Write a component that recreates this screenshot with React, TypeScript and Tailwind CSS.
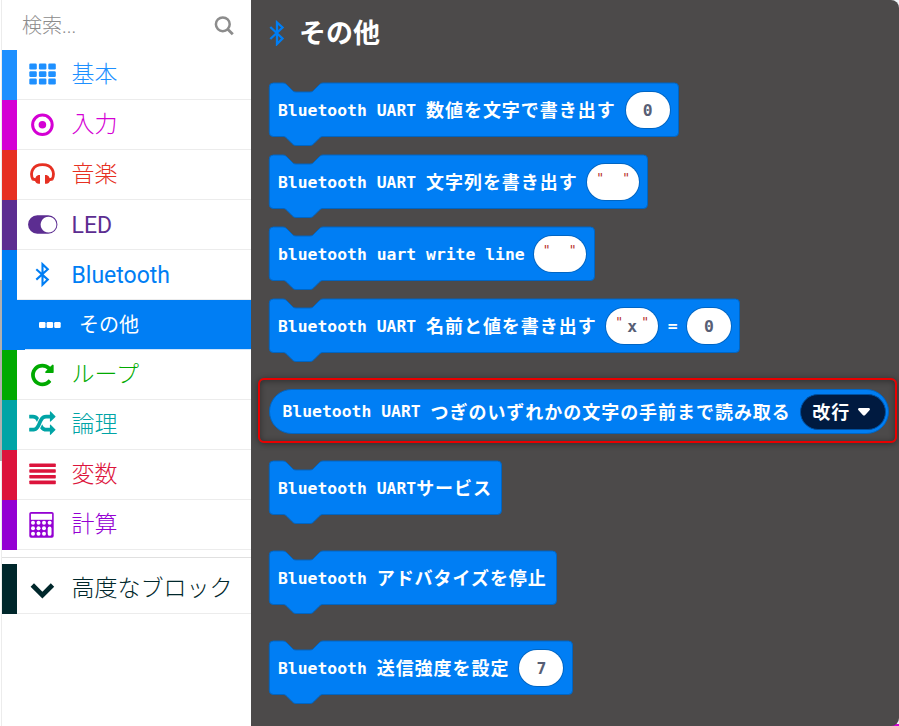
import type { ReactNode } from 'react';
import clsx from 'clsx';

interface Category {
  name: string;
  bar: string;
  text: string;
  icon: ReactNode;
}

const LABEL_FONT = "font-[Roboto,'Noto_Sans_CJK_JP',sans-serif]";
const JP_FONT = "font-['Noto_Sans_CJK_JP',sans-serif]";
const BLOCK_FONT = "font-['DejaVu_Sans_Mono','Noto_Sans_CJK_JP',monospace]";

function Icon({ children }: { children: ReactNode }) {
  return (
    <svg viewBox="0 0 32 32" className="w-8 h-8 shrink-0" fill="currentColor">
      {children}
    </svg>
  );
}

const GridIcon = (
  <Icon>
    {[4.6, 12.2, 19.6].map((y) =>
      [3.3, 12.9, 22.3].map((x) => <rect key={`${x}-${y}`} x={x} y={y} width="7.5" height="5.8" rx="1.2" />)
    )}
  </Icon>
);

const TargetIcon = (
  <Icon>
    <circle cx="16.4" cy="15.8" r="9.8" fill="none" stroke="currentColor" strokeWidth="3" />
    <circle cx="16.4" cy="15.8" r="3.8" />
  </Icon>
);

const HeadphoneIcon = (
  <Icon>
    <path
      d="M7 20.5C3.2 13.5 7 5.7 16.5 5.7S29.800 13.500 26 20.500"
      fill="none"
      stroke="currentColor"
      strokeWidth="2.8"
    />
    <path d="M14 16v8.800h-1.500C11 24.800 9.500 23.500 9 22L6 21.500L7.200 18.600L9.300 19.200C10 17.500 11 16.300 12.500 16zM19 16v8.800h1.500C22 24.800 23.500 23.500 24 22L27 21.500L25.800 18.600L23.700 19.200C23 17.500 22 16.300 20.500 16z" />
  </Icon>
);

const ToggleIcon = (
  <Icon>
    <path
      fillRule="evenodd"
      d="M11.300 6.300h10.900a9.250 9.250 0 0 1 0 18.500H11.300a9.250 9.250 0 0 1 0-18.500zM22.500 7.700a7.900 7.900 0 1 0 .01 0z"
    />
  </Icon>
);

const BluetoothIcon = (
  <Icon>
    <path
      d="M10.300 10.300L21.800 20.600L16.500 25.800V5.200L21.800 10.300L10.300 20.600"
      fill="none"
      stroke="currentColor"
      strokeWidth="2.1"
    />
  </Icon>
);

const RepeatIcon = (
  <Icon>
    <g transform="translate(3.200 2.800) scale(0.0147)">
      <path d="M1664 256v448q0 26-19 45t-45 19h-448q-42 0-59-40-17-39 14-69l138-138q-148-137-349-137-104 0-198.500 40.500t-163.500 109.500-109.500 163.500-40.500 198.500 40.500 198.500 109.500 163.500 163.500 109.500 198.500 40.500q119 0 225-52t179-147q7-10 23-12 15 0 25 9l137 138q9 8 9.500 20.500t-7.500 22.500q-109 132-264 204.500t-327 72.500q-156 0-298-61t-245-164-164-245-61-298 61-298 164-245 245-164 298-61q147 0 284.500 55.500t244.500 156.500l130-129q29-31 70-14 39 17 39 59z" />
    </g>
  </Icon>
);

const ShuffleIcon = (
  <Icon>
    <g transform="translate(3.200 1.900) scale(0.0147)">
      <path d="M666 481q-60 92-137 273-22-45-37-72.500t-40.500-63.500-51-56.500-63-35-81.500-14.500h-224q-14 0-23-9t-9-23v-192q0-14 9-23t23-9h224q250 0 410 225zm1126 799q0 14-9 23l-320 320q-9 9-23 9-13 0-22.500-9.500t-9.500-22.500v-192q-32 0-85 .5t-81 1-73-1-71-5-64-10.500-63-18.500-58-28.500-59-40-55-53.500-56-69.500q59-93 136-273 22 45 37 72.500t40.500 63.500 51 56.500 63 35 81.500 14.500h256v-192q0-14 9-23t23-9q12 0 24 10l319 319q9 9 9 23zm0-896q0 14-9 23l-320 320q-9 9-23 9-13 0-22.500-9.500t-9.500-22.500v-192h-256q-48 0-87 15t-69 45-51 61.500-45 77.500q-32 62-78 171-29 66-49.500 111t-54 105-64 100-74 83-90 68.500-106.500 42-128 16.500h-224q-14 0-23-9t-9-23v-192q0-14 9-23t23-9h224q48 0 87-15t69-45 51-61.500 45-77.500q32-62 78-171 29-66 49.500-111t54-105 64-100 74-83 90-68.500 106.500-42 128-16.500h256v-192q0-14 9-23t23-9q12 0 24 10l319 319q9 9 9 23z" />
    </g>
  </Icon>
);

const LinesIcon = (
  <Icon>
    {[4.500, 10.200, 15.900, 21.600].map((y) => (
      <rect key={y} x="3.300" y={y} width="26.500" height="3.600" rx="0.700" />
    ))}
  </Icon>
);

const CalcIcon = (
  <Icon>
    <rect x="3.300" y="3" width="24.400" height="25.700" rx="1.800" />
    <rect x="4.900" y="4.800" width="21.200" height="6" fill="white" />
    {[13.800, 19.300, 24.800].map((y) =>
      [7, 12.500, 18].map((x) => <circle key={`${x}-${y}`} cx={x} cy={y} r="2" fill="white" />)
    )}
    <circle cx="23.600" cy="13.800" r="2" fill="white" />
    <rect x="21.700" y="17.500" width="3.800" height="9.300" rx="1.900" fill="white" />
  </Icon>
);

const ChevronIcon = (
  <Icon>
    <path d="M6.300 12L16.400 22.100L26.500 12" fill="none" stroke="currentColor" strokeWidth="4.800" />
  </Icon>
);

const categories: Category[] = [
  { name: '基本', bar: 'bg-[#1e90ff]', text: 'text-[#1e90ff]', icon: GridIcon },
  { name: '入力', bar: 'bg-[#d400d4]', text: 'text-[#d400d4]', icon: TargetIcon },
  { name: '音楽', bar: 'bg-[#e63022]', text: 'text-[#e63022]', icon: HeadphoneIcon },
  { name: 'LED', bar: 'bg-[#5c2d91]', text: 'text-[#5c2d91]', icon: ToggleIcon },
  { name: 'Bluetooth', bar: 'bg-[#007ef4]', text: 'text-[#007ef4]', icon: BluetoothIcon },
];

const moreCategories: Category[] = [
  { name: 'ループ', bar: 'bg-[#00aa00]', text: 'text-[#00aa00]', icon: RepeatIcon },
  { name: '論理', bar: 'bg-[#00a4a6]', text: 'text-[#00a4a6]', icon: ShuffleIcon },
  { name: '変数', bar: 'bg-[#dc143c]', text: 'text-[#dc143c]', icon: LinesIcon },
  { name: '計算', bar: 'bg-[#9400d3]', text: 'text-[#9400d3]', icon: CalcIcon },
];

function CategoryRow({ category }: { category: Category }) {
  const latin = /^[A-Za-z]+$/.test(category.name);
  return (
    <div className="flex h-[50px]">
      <div className={clsx('w-[15px]', category.bar)} />
      <div className={clsx('flex flex-1 items-center border-b border-[#ececec] pl-[9px]', category.text)}>
        {category.icon}
        <span
          className={clsx(
            'ml-[13.5px] text-[23px] leading-8 whitespace-nowrap',
            latin ? 'pt-0.5 font-normal' : 'font-light',
            LABEL_FONT
          )}
        >
          {category.name}
        </span>
      </div>
    </div>
  );
}

function Sidebar() {
  return (
    <aside className="flex h-full w-[251px] shrink-0">
      <div className="w-0.5 border-r border-[#ececec]">
        <div className="mt-[280px] h-[181px] w-0.5 bg-[#b0b0b0]" />
      </div>
      <div className="flex-1">
        <div className="flex h-[50px] items-center justify-between pr-[17px] pl-5 text-[#8c8c8c]">
          <span className={clsx('pt-px text-[20px] leading-6 font-light', LABEL_FONT)}>検索...</span>
          <svg viewBox="0 0 20 20" className="mt-px h-5 w-5" fill="none" stroke="currentColor">
            <circle cx="8.800" cy="8.300" r="6.900" strokeWidth="2.500" />
            <path d="M13.700 13.200L18.800 18.300" strokeWidth="2.800" />
          </svg>
        </div>
        {categories.map((c) => (
          <CategoryRow key={c.name} category={c} />
        ))}
        <div className="flex h-[50px] text-white">
          <div className="w-[23px] bg-[#007ef4]" />
          <div className="flex flex-1 items-center border-b border-[#cfe4fa] bg-[#007ef4] bg-clip-padding pl-[15px]">
            <svg viewBox="0 0 22 6" className="-ml-px h-1.5 w-[22px]" fill="currentColor">
              {[0, 7.600, 15.200].map((x) => (
                <rect key={x} x={x} width="6.500" height="6" rx="1.200" />
              ))}
            </svg>
            <span className={clsx('ml-[18px] text-[20px] leading-6 font-normal', LABEL_FONT)}>その他</span>
          </div>
        </div>
        {moreCategories.map((c) => (
          <CategoryRow key={c.name} category={c} />
        ))}
        <div className="mt-[7px] mb-1.5 border-t border-[#e0e0e0]" />
        <CategoryRow
          category={{ name: '高度なブロック', bar: 'bg-[#00272b]', text: 'text-[#00272b]', icon: ChevronIcon }}
        />
      </div>
    </aside>
  );
}

function Latin({ children }: { children: ReactNode }) {
  return <span className="pt-px">{children}</span>;
}

function Jp({ children }: { children: ReactNode }) {
  return <span className={clsx('pb-0.5 text-[18px] font-bold tracking-[0.96px]', JP_FONT)}>{children}</span>;
}

function NumberInput({ value }: { value: string }) {
  return (
    <span className="-mt-px flex h-9 w-11 items-center justify-center rounded-full bg-white pt-[3px] text-[#575e75] ring-1 ring-[#0065c3]">
      {value}
    </span>
  );
}

function TextInput({ value }: { value: string }) {
  return (
    <span className="-mt-px flex h-9 w-[52px] items-center justify-center rounded-full bg-white pt-[3px] text-[#575e75] ring-1 ring-[#0065c3]">
      <span className="-mt-2.5 w-2 text-[13px] font-normal text-[#b7312c]">"</span>
      <span className="w-[18px] text-center">{value}</span>
      <span className="-mt-2.5 w-2 text-[13px] font-normal text-[#b7312c]">"</span>
    </span>
  );
}

interface BlockProps {
  width: number;
  children: ReactNode;
}

// statement block: notch on the top edge, matching tab under the bottom edge
function Block({ width, children }: BlockProps) {
  return (
    <div className="relative h-[54px]" style={{ width }}>
      <svg className="absolute top-0 left-0 overflow-visible" width={width} height="63">
        <path
          d={`M0.300 4a4 4 0 0 1 4-4H14c2 0 3 1 4 2l5 5c1 1 2 2 4 2h14c2 0 3-1 4-2l5-5c1-1 2-2 4-2H${width - 4.5}a4 4 0 0 1 4 4V49.500a4 4 0 0 1-4 4H54c-2 0-3 1-4 2l-5 5c-1 1-2 2-4 2H27c-2 0-3-1-4-2l-5-5c-1-1-2-2-4-2H4.300a4 4 0 0 1-4-4z`}
          fill="#007ef4"
          stroke="#0065c3"
        />
      </svg>
      <div className="relative flex h-[54px] items-center pl-[9px] whitespace-pre">{children}</div>
    </div>
  );
}

function Flyout() {
  return (
    <main className="h-full rounded-r-lg bg-[#4c4a4a] pl-[18px] text-white">
      <div className="flex h-[65px] items-center">
        <svg viewBox="0 0 16 26" className="h-[26px] w-4 text-[#007ef4]" fill="none" stroke="currentColor">
          <path d="M1.300 7L13.500 18.500L8 24V2.500L13.500 7.500L1.300 19" strokeWidth="2.300" />
        </svg>
        <h1 className={clsx('ml-3.5 pb-0.5 text-[27px] leading-8 font-bold', JP_FONT)}>その他</h1>
      </div>
      <div className={clsx('flex flex-col pt-[18px] text-[16.400px] leading-6 font-bold', BLOCK_FONT)}>
        <div className="flex flex-col gap-[18px]">
          <Block width={410}>
            <Latin>Bluetooth UART </Latin>
            <Jp>数値を文字で書き出す</Jp>
            <span className="ml-2.5">
              <NumberInput value="0" />
            </span>
          </Block>
          <Block width={379}>
            <Latin>Bluetooth UART </Latin>
            <Jp>文字列を書き出す</Jp>
            <span className="ml-[9.5px]">
              <TextInput value="" />
            </span>
          </Block>
          <Block width={326}>
            <Latin>bluetooth uart write line</Latin>
            <span className="ml-[9px]">
              <TextInput value="" />
            </span>
          </Block>
          <Block width={471}>
            <Latin>Bluetooth UART </Latin>
            <Jp>名前と値を書き出す</Jp>
            <span className="ml-[9.5px]">
              <TextInput value="x" />
            </span>
            <span className="mx-[9.5px]">=</span>
            <NumberInput value="0" />
          </Block>
        </div>
        <div className="mt-[25px] -ml-[11px] h-[65px] w-[639px] rounded-md border-2 border-[#e80000] pt-[9px] pl-[9px] shadow-[0_1px_6px_rgba(0,0,0,0.4),inset_0_1px_6px_rgba(0,0,0,0.4)]">
          <div className="flex h-[45px] w-[620px] items-center rounded-full border border-[#0065c3] bg-[#007ef4] pl-[12.5px] whitespace-pre">
            <Latin>Bluetooth UART </Latin>
            <Jp>つぎのいずれかの文字の手前まで読み取る</Jp>
            <span className="ml-[9.5px] flex h-9 w-[86px] items-center rounded-full border border-[#0050a0] bg-[#001a40] pl-[11px]">
              <Jp>改行</Jp>
              <svg viewBox="0 0 12 8" className="mt-px ml-2 h-2 w-3" fill="white">
                <path d="M1.500 0h9c1.300 0 2 1.300 1 2.300L7.200 7c-.7.700-1.700.700-2.400 0L.5 2.300C-.5 1.300.2 0 1.500 0z" />
              </svg>
            </span>
          </div>
        </div>
        <div className="mt-[18px] flex flex-col gap-9">
          <Block width={233}>
            <Latin>Bluetooth UART</Latin>
            <Jp>サービス</Jp>
          </Block>
          <Block width={288}>
            <Latin>Bluetooth </Latin>
            <Jp>アドバタイズを停止</Jp>
          </Block>
          <Block width={304}>
            <Latin>Bluetooth </Latin>
            <Jp>送信強度を設定</Jp>
            <span className="ml-2.5">
              <NumberInput value="7" />
            </span>
          </Block>
        </div>
      </div>
    </main>
  );
}

function App() {
  return (
    <div className="flex h-[726px] w-[899px] overflow-hidden bg-white">
      <Sidebar />
      <div className="flex-1 bg-[linear-gradient(to_top,#d400d4_2px,#f0f4f8_2px)]">
        <Flyout />
      </div>
    </div>
  );
}

export default App;
